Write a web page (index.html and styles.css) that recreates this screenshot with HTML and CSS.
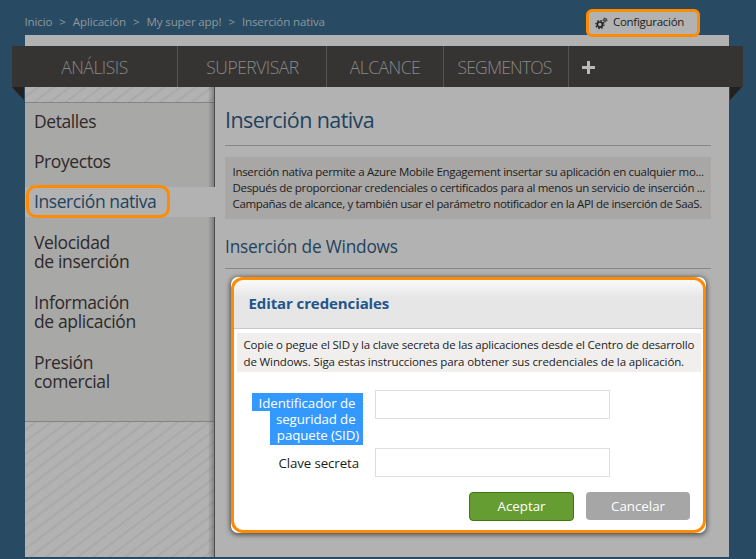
FILE: index.html
```html
<!DOCTYPE html>
<html lang="es">
<head>
<meta charset="utf-8">
<title>Inserción nativa</title>
<link rel="stylesheet" href="styles.css">
</head>
<body>
<header class="top">
  <nav class="crumbs"><span>Inicio</span><i>&gt;</i><span>Aplicación</span><i>&gt;</i><span>My super app!</span><i>&gt;</i><span>Inserción nativa</span></nav>
  <a class="settings">
    <svg class="gear" width="13" height="13" viewBox="0 0 13 13" fill="none" stroke="#242424">
      <circle cx="4.9" cy="7.6" r="2.6" stroke-width="1.7"/>
      <circle cx="4.9" cy="7.6" r="4" stroke-width="1.3" stroke-dasharray="1.57 1.57"/>
      <circle cx="10" cy="3" r="1.3" stroke-width="1"/>
      <circle cx="10" cy="3" r="2.1" stroke-width=".7" stroke-dasharray=".82 .82"/>
    </svg>
    Configuración
  </a>
</header>
<div class="page">
  <nav class="tabs">
    <a class="t1">ANÁLISIS</a><a class="t2">SUPERVISAR</a><a class="t3">ALCANCE</a><a class="t4">SEGMENTOS</a><a class="plus"></a>
  </nav>
  <div class="columns">
    <aside class="sidebar">
      <ul class="menu">
        <li>Detalles</li>
        <li>Proyectos</li>
        <li class="active">Inserción nativa</li>
        <li class="two">Velocidad<br>de inserción</li>
        <li class="two">Información<br>de aplicación</li>
        <li class="two">Presión<br>comercial</li>
      </ul>
    </aside>
    <main class="content">
      <h1>Inserción nativa</h1>
      <div class="info">
        <p>Inserción nativa permite a Azure Mobile Engagement insertar su aplicación en cualquier mo...</p>
        <p class="l2">Después de proporcionar credenciales o certificados para al menos un servicio de inserción ...</p>
        <p class="l3">Campañas de alcance, y también usar el parámetro notificador en la API de inserción de SaaS.</p>
      </div>
      <h2>Inserción de Windows</h2>
    </main>
  </div>
</div>
<div class="dialog">
  <h3>Editar credenciales</h3>
  <p class="hint">Copie o pegue el SID y la clave secreta de las aplicaciones desde el Centro de desarrollo<br><span>de Windows. Siga estas instrucciones para obtener sus credenciales de la aplicación.</span></p>
  <div class="row">
    <label class="selected"><span class="s1">Identificador de</span><span class="s2">seguridad de</span><span class="s3">paquete (SID)</span></label>
    <input type="text">
  </div>
  <div class="row second">
    <label>Clave secreta</label>
    <input type="text">
  </div>
  <div class="actions"><button class="ok">Aceptar</button><button>Cancelar</button></div>
</div>
</body>
</html>
```
FILE: styles.css
```css
*, *::before, *::after { box-sizing: border-box; }
body {
  margin: 0;
  height: 559px;
  overflow: hidden;
  position: relative;
  background: #284b63;
  font-family: "Open Sans", "Noto Sans", sans-serif;
  color: #1c1c1c;
  white-space: nowrap;
}
h1, h2, h3, p, ul { margin: 0; padding: 0; font-weight: 400; }

.top { height: 35px; padding: 12px 0 0 24.5px; }
.crumbs { display: flex; font-size: 11.6px; line-height: 20px; letter-spacing: -.16px; color: #8f979c; }
.crumbs i { font-style: normal; width: 20.5px; text-align: center; }
.settings {
  position: absolute; left: 586px; top: 9px; width: 114px; height: 28px;
  display: flex; align-items: center; gap: 5px; padding-left: 6px;
  border: 3px solid #ff8c00; border-radius: 6px; background: #b2b2b2;
  font-size: 11.5px; letter-spacing: -.28px; line-height: 20px; padding-bottom: 3px;
}
.gear { margin-top: 3px; }

.page { width: 704px; height: 522px; margin-left: 25px; padding-top: 11px; background: #b2b2b2; }
.tabs {
  position: relative; display: flex; height: 41px; margin: 0 -14px 0 -13px;
  background: #363433; color: #86888a;
  font-size: 17.5px; font-weight: 300; line-height: 42px; letter-spacing: -.5px; text-align: center;
}
.tabs::before, .tabs::after { content: ""; position: absolute; top: 41px; width: 12px; height: 13px; background: #22211f; }
.tabs::before { left: 0; clip-path: polygon(0 0, 100% 0, 100% 100%); }
.tabs::after { right: 1px; clip-path: polygon(0 0, 100% 0, 0 100%); }
.tabs a { border-right: 1px solid #555453; }
.t1 { width: 166px; }
.t2 { width: 149px; padding-left: 1px; }
.t3 { width: 117px; }
.t4 { width: 125px; letter-spacing: -.8px; padding-right: 3px; }
.tabs .plus {
  width: 13px; height: 13px; margin: 15px 0 0 13px; border: 0;
  background: linear-gradient(#b9b9b9, #b9b9b9) center / 13px 3px no-repeat, linear-gradient(#b9b9b9, #b9b9b9) center / 3px 13px no-repeat;
}

.columns { display: flex; height: 470px; }
.sidebar {
  position: relative; width: 190px; padding-top: 15px; border-right: 1px solid #4b4b4b;
  background: repeating-linear-gradient(143deg, #b2b2b2 0 6.5px, #a9a9a9 7.5px 8.5px, #b2b2b2 9.5px);
}
.sidebar::after { content: ""; position: absolute; right: 0; top: 0; bottom: 0; width: 6px; background: linear-gradient(90deg, transparent, rgba(0,0,0,.25)); }
.menu {
  list-style: none; height: 320px; padding-top: 4px; display: flex; flex-direction: column; gap: 10px;
  background: #a8a8a6; border: solid #848484; border-width: 1px 0;
  font-size: 17.5px; line-height: 20px; letter-spacing: -.42px; color: #2f292b;
}
.menu li { height: 30px; padding: 4px 0 0 9px; }
.menu .two { height: 50px; line-height: 19px; padding-top: 6px; letter-spacing: -.36px; }
.menu .active { position: relative; z-index: 1; margin-right: -1px; background: #b2b2b2; color: #1f435d; }
.menu .active::after { content: ""; position: absolute; left: 1px; top: -2px; width: 144px; height: 33px; border: 3px solid #ff8c00; border-radius: 10px; }

.content { width: 486px; margin-left: 10px; }
h1 { height: 59px; padding-top: 18px; line-height: 30px; font-size: 21.5px; letter-spacing: -.6px; color: #1f435d; border-bottom: 1px solid #868686; }
.info { margin-top: 11px; height: 62px; padding: 7px 0 0 7.5px; background: #a8a7a5; font-size: 11.5px; line-height: 16px; letter-spacing: -.3px; }
.l2 { letter-spacing: -.31px; }
.l3 { letter-spacing: -.35px; }
h2 { height: 50px; padding-top: 16px; line-height: 24px; font-size: 17.3px; letter-spacing: -.2px; color: #1f435d; border-bottom: 1px solid #868686; }

.dialog {
  position: absolute; left: 231px; top: 277px; width: 475px; height: 256px; padding: 3px;
  border-radius: 7px; background: #fff;
  box-shadow: 0 1px 5px 1px rgba(0,0,0,.55); overflow: hidden;
}
.dialog::after { content: ""; position: absolute; inset: 0; border: 3px solid #ff8c00; border-radius: 12px; pointer-events: none; }
.dialog h3 {
  height: 49px; padding: 11px 0 0 14.5px; border-bottom: 1px solid #c8c8c8;
  background: linear-gradient(#fafafa, #e6e6e6 18px);
  font-size: 15px; line-height: 24px; font-weight: 700; letter-spacing: -.1px; color: #24558a;
}
.hint { margin: 4px 2px 0 3px; height: 39px; padding: 3px 0 0 6.5px; background: #f0efee; font-size: 11.5px; line-height: 17px; letter-spacing: -.18px; }
.hint span { letter-spacing: -.12px; }
.row { display: flex; height: 59px; margin-top: 18px; font-size: 13.3px; letter-spacing: -.1px; }
.row label { width: 141px; margin-right: 0; padding-right: 16px; text-align: right; line-height: 30px; }
.row input { width: 235px; height: 29px; border: 1px solid #dedede; background: #fff; padding: 0; }
.row .selected { display: flex; flex-direction: column; align-items: flex-end; padding: 3px 12px 0 0; line-height: 16px; color: #fff; }
.selected span { background: #3399ff; padding: 0 7.5px 0 6px; height: 16px; }
.selected .s1 { width: 111px; height: 18px; padding-top: 2px; letter-spacing: -.05px; }
.selected .s2 { width: 93px; }
.selected .s3 { width: 93px; height: 18px; padding-right: 4px; }
.second { margin-top: -1px; height: 44px; }
.actions { display: flex; gap: 12px; padding-left: 235px; }
button { width: 104px; height: 28px; padding: 0; border: 0; border-radius: 4px; background: #a6a6a6; color: #fff; font: 13.3px/28px "Open Sans", "Noto Sans", sans-serif; }
.ok { width: 105px; height: 29px; line-height: 27px; border: 1px solid #3f7812; background: #669d33; }
```
